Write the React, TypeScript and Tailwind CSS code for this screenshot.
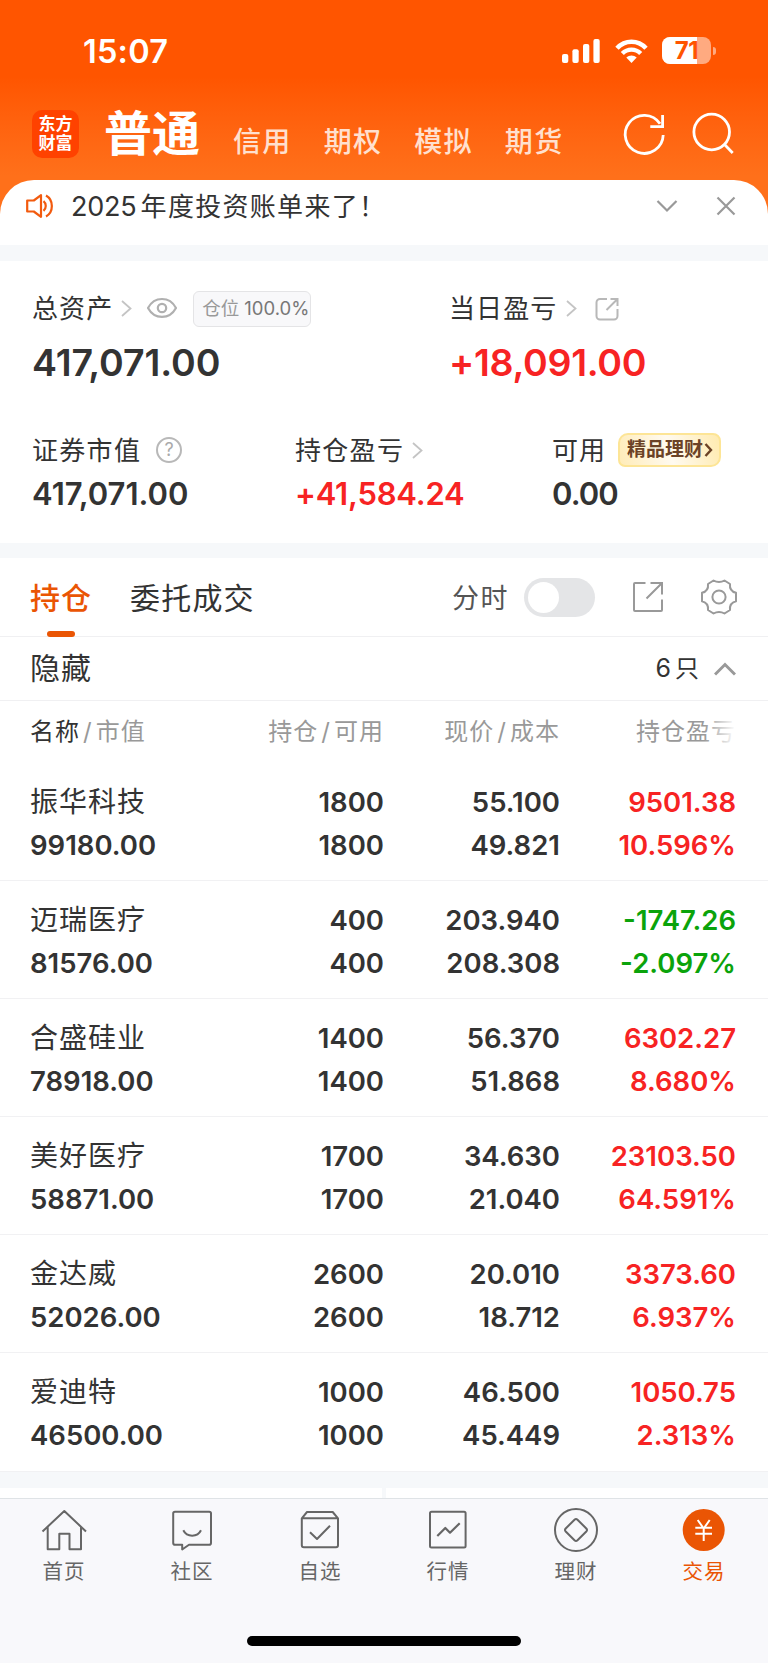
import type { ReactNode } from "react";

const accounts = ["信用", "期权", "模拟", "期货"];

const holdings = [
  { name: "振华科技", value: "99180.00", amount: "1800", usable: "1800", price: "55.100", cost: "49.821", profit: "9501.38", rate: "10.596%" },
  { name: "迈瑞医疗", value: "81576.00", amount: "400", usable: "400", price: "203.940", cost: "208.308", profit: "-1747.26", rate: "-2.097%" },
  { name: "合盛硅业", value: "78918.00", amount: "1400", usable: "1400", price: "56.370", cost: "51.868", profit: "6302.27", rate: "8.680%" },
  { name: "美好医疗", value: "58871.00", amount: "1700", usable: "1700", price: "34.630", cost: "21.040", profit: "23103.50", rate: "64.591%" },
  { name: "金达威", value: "52026.00", amount: "2600", usable: "2600", price: "20.010", cost: "18.712", profit: "3373.60", rate: "6.937%" },
  { name: "爱迪特", value: "46500.00", amount: "1000", usable: "1000", price: "46.500", cost: "45.449", profit: "1050.75", rate: "2.313%" },
];

const StatusBar = () => (
  <div className="flex h-[64px] pt-[37px] pl-[83px] pr-[52px] items-center">
    <span className="mt-[3px] font-semibold text-[32.5px] leading-[28px] tracking-[0.2px]">15:07</span>
    <svg className="ml-auto" width="38" height="24" fill="white">
      <rect x="0" y="15" width="6.3" height="9" rx="2" />
      <rect x="10.4" y="10.3" width="6.3" height="13.7" rx="2" />
      <rect x="21" y="5" width="6.3" height="19" rx="2" />
      <rect x="31.4" y="0" width="6.3" height="24" rx="2" />
    </svg>
    <svg className="ml-[15px]" width="33" height="24" fill="none" stroke="white">
      <path d="M2 9.2C10 .6 23 .6 31 9.2" strokeWidth="4.6" />
      <path d="M7.3 14.5c5.2-5.2 13.2-5.2 18.4 0" strokeWidth="4.4" />
      <path d="M16.5 24l-5.2-5.4c2.9-2.7 7.5-2.7 10.4 0z" fill="white" stroke="none" />
    </svg>
    <div className="relative ml-[14px] w-[49px] h-[27px] rounded-[8px] overflow-hidden bg-white/50">
      <div className="w-[35px] h-full bg-white" />
      <span className="absolute inset-0 text-center font-bold text-[24px] leading-[27px] tracking-[-0.5px] text-[#ff5500]">71</span>
    </div>
    <div className="ml-[2px] w-[3px] h-[8px] rounded-r-full bg-white/50" />
  </div>
);

const Header = () => (
  <header className="h-[220px] bg-linear-to-b from-[#ff5500] from-35% to-[#ff701a] to-80% text-white">
    <StatusBar />
    <div className="flex h-[116px] pl-8 pr-[30px]">
      <div className="mt-[46px] w-[47px] h-[48px] rounded-[10px] bg-[#ff4200] flex flex-col items-center justify-center font-bold text-[17px] leading-[19px]">
        <span>东方</span>
        <span>财富</span>
      </div>
      <h1 className="mt-[42px] ml-[25px] font-bold text-[48px] leading-[56px]">普通</h1>
      <nav className="mt-[60px] ml-[33px] flex gap-[32px] font-medium text-[28px] leading-[36px] tracking-[1.3px] text-[#ffe0cf]">
        {accounts.map((item) => (
          <a key={item}>{item}</a>
        ))}
      </nav>
      <svg className="mt-[46px] ml-auto" width="48" height="48" fill="none" stroke="white" strokeWidth="2.8">
        <path d="M43.2 25A19 19 0 1 1 40 13.8" />
        <path d="M42.6 5v11.6H30.3" />
      </svg>
      <svg className="mt-[46px] ml-[22px]" width="48" height="48" fill="none" stroke="white" strokeWidth="2.8">
        <circle cx="21.7" cy="22" r="17.8" />
        <path d="M34.3 34.3l8.4 8.6" />
      </svg>
    </div>
  </header>
);

const Notice = () => (
  <div className="relative -mt-10 h-[65px] rounded-t-[34px] bg-white flex items-start pt-[13px] pl-[26px] pr-8">
    <svg className="mt-px" width="28" height="24" fill="none" stroke="#f25a0e" strokeWidth="2.2">
      <path d="M1.2 6.5h6.6L15 1.2v21.6l-7.2-5.3H1.2z" strokeLinejoin="round" />
      <path d="M17.5 7.2c3 2.4 3 7.2 0 9.6M20 1.5c7.8 4.5 7.8 16.5 0 21" />
    </svg>
    <span className="mt-px ml-[17px] text-[26px] leading-[26px] tracking-[1.3px]">
      <span className="text-[27px] tracking-[-0.2px] mr-[4px]">2025</span>年度投资账单来了！
    </span>
    <svg className="ml-auto mt-[6px]" width="22" height="14" fill="none" stroke="#999" strokeWidth="2.2">
      <path d="M1.5 2L11 11.5 20.5 2" />
    </svg>
    <svg className="ml-[38px] mt-[3px]" width="20" height="20" fill="none" stroke="#999" strokeWidth="2.2">
      <path d="M1.5 1.5l17 17M18.5 1.5l-17 17" />
    </svg>
  </div>
);

const Arrow = () => (
  <svg width="11" height="17" fill="none" stroke="#c4c4c4" strokeWidth="1.8">
    <path d="M1 1l8.5 7.5L1 16" />
  </svg>
);

const Summary = () => (
  <section className="h-[282px] bg-white pt-[28px]">
    <div className="flex">
      <div className="w-[449px] pl-8">
        <div className="flex h-[38px] items-center">
          <span className="text-[26px] tracking-[1.1px]">总资产</span>
          <span className="ml-[8px]"><Arrow /></span>
          <svg className="ml-[15px]" width="30" height="22" fill="none" stroke="#b0b0b0" strokeWidth="2.2">
            <path d="M1 11C7.5-1.5 22.5-1.5 29 11 22.5 23.5 7.5 23.5 1 11z" strokeLinejoin="round" transform="matrix(1 0 0 .95 0 .5)" />
            <circle cx="15" cy="11" r="4.2" />
          </svg>
          <span className="ml-[16px] mt-[2px] flex items-center h-[36px] w-[118px] pl-[8px] whitespace-nowrap rounded-[6px] border border-[#e4e4e6] bg-[#f8f8fa] text-[18.5px] text-[#999]">
            仓位<span className="ml-[5px] text-[#777] text-[18.5px]">100.0%</span>
          </span>
        </div>
        <p className="mt-[14px] font-semibold text-[37.5px] leading-[44px] tracking-[-0.1px]">417,071.00</p>
      </div>
      <div>
        <div className="flex h-[38px] items-center">
          <span className="text-[26px] tracking-[1.1px]">当日盈亏</span>
          <span className="ml-[9px]"><Arrow /></span>
          <svg className="ml-[18px] mt-[2px]" width="24" height="24" fill="none" stroke="#b8b8b8" strokeWidth="2">
            <path d="M12 2H5a3.5 3.5 0 0 0-3.5 3.5V19A3.5 3.5 0 0 0 5 22.5h14a3.5 3.5 0 0 0 3.5-3.5v-7M15.5 2h7v7M22 2.5L11.5 13" />
          </svg>
        </div>
        <p className="mt-[14px] font-semibold text-[37.5px] leading-[44px] tracking-[-0.3px] text-[#f72323]">+18,091.00</p>
      </div>
    </div>
    <div className="mt-[46px] flex">
      <div className="w-[295px] pl-8">
        <div className="flex h-[38px] items-center">
          <span className="text-[26px] tracking-[1.3px]">证券市值</span>
          <span className="ml-[15px] w-[26px] h-[26px] rounded-full border-2 border-[#b8b8b8] text-[#aaa] text-[18px] leading-[22px] text-center">?</span>
        </div>
        <p className="mt-[7px] font-semibold text-[31px] leading-[36px]">417,071.00</p>
      </div>
      <div className="w-[257px]">
        <div className="flex h-[38px] items-center">
          <span className="text-[26px] tracking-[1.3px]">持仓盈亏</span>
          <span className="ml-[8px]"><Arrow /></span>
        </div>
        <p className="mt-[7px] font-semibold text-[31px] leading-[36px] tracking-[-0.2px] text-[#f72323]">+41,584.24</p>
      </div>
      <div>
        <div className="flex h-[38px] items-center">
          <span className="text-[26px] tracking-[1px]">可用</span>
          <span className="ml-[12px] -mt-px flex items-center h-[34px] w-[103px] pl-[7px] rounded-tl-[10px] rounded-tr-[8px] rounded-br-[10px] rounded-bl-[7px] border-2 border-[#fde596] bg-linear-[75deg] from-[#ffecb8] via-[#fffaf0] to-[#ffebb0] font-bold text-[19px] text-[#6b4226]">
            <span className="mt-px">精品理财</span>
            <svg className="ml-px" width="9" height="14" fill="none" stroke="#6b4226" strokeWidth="2.4">
              <path d="M1.5 1L7 7l-5.5 6" />
            </svg>
          </span>
        </div>
        <p className="mt-[7px] font-semibold text-[31px] leading-[36px] tracking-[-0.9px]">0.00</p>
      </div>
    </div>
  </section>
);

const Tabs = () => (
  <div className="h-[79px] bg-white border-b border-[#f0f0f2] flex items-start pl-[30px] pr-[30px]">
    <div className="flex flex-col items-center">
      <span className="mt-[20px] font-medium text-[30px] leading-[40px] tracking-[1px] text-[#ea5504]">持仓</span>
      <span className="mt-[13px] w-[28px] h-[6px] rounded-full bg-[#ea5504]" />
    </div>
    <span className="mt-[20px] ml-[38px] text-[30px] leading-[40px] tracking-[1.2px]">委托成交</span>
    <span className="mt-[21px] ml-auto text-[27px] leading-[40px] tracking-[1.5px] text-[#555]">分时</span>
    <span className="mt-[20px] ml-[15px] w-[71px] h-[39px] rounded-full bg-[#e4e5e7] p-1">
      <span className="block w-[31px] h-[31px] rounded-full bg-white" />
    </span>
    <svg className="mt-[23px] ml-[37px]" width="32" height="32" fill="none" stroke="#999" strokeWidth="2">
      <path d="M13.5 2H3a1 1 0 0 0-1 1v26a1 1 0 0 0 1 1h26a1 1 0 0 0 1-1V18.5M18.5 2H30v11.5M29.5 2.5l-15 15" />
    </svg>
    <svg className="mt-[20px] ml-[36px]" width="38" height="38" fill="none" stroke="#999" strokeWidth="2">
      <path d="M13.5 2.5q5.5 3.2 11 0l5.5 3.5q-.8 7 6 8.8v8.4q-6.800 1.800-6 8.800l-5.500 3.500q-5.500-3.200-11 0L8 32q.8-7-6-8.800v-8.400Q8.800 13 8 6z" strokeLinejoin="round" />
      <circle cx="19" cy="19" r="6.600" />
    </svg>
  </div>
);

const HoldingList = () => (
  <section className="bg-white">
    <div className="h-[64px] border-b border-[#f0f0f2] flex items-center pl-[30px] pr-[32px]">
      <span className="text-[30px] tracking-[1px]">隐藏</span>
      <span className="ml-auto text-[24px] tracking-[1px]"><span className="text-[25px] mr-[3px]">6</span>只</span>
      <svg className="ml-[14px]" width="22" height="14" fill="none" stroke="#999" strokeWidth="3">
        <path d="M1 12.5L11 2.5l10 10" />
      </svg>
    </div>
    <div className="h-[62px] grid grid-cols-[1fr_160px_176px_176px] items-center pl-[30px] pr-[32px] text-[24px] tracking-[1px] text-[#999] text-right">
      <span className="text-left"><span className="text-[#333]">名称</span><span className="mx-[3px]">/</span>市值</span>
      <span>持仓<span className="mx-[3px]">/</span>可用</span>
      <span>现价<span className="mx-[3px]">/</span>成本</span>
      <span className="relative">
        持仓盈亏
        <span className="absolute right-0 inset-y-0 w-[32px] bg-linear-to-r from-white/0 to-white" />
      </span>
    </div>
    {holdings.map((item) => (
      <div
        key={item.name}
        className="h-[118.1px] border-b border-[#f1f1f3] grid grid-cols-[1fr_160px_176px_176px] pt-[18px] pl-[30px] pr-[32px] font-semibold text-[27.5px] leading-[42.6px] text-right"
      >
        <div className="text-left">
          <p className="font-normal text-[28px] tracking-[1px]">{item.name}</p>
          <p>{item.value}</p>
        </div>
        <div>
          <p>{item.amount}</p>
          <p>{item.usable}</p>
        </div>
        <div>
          <p>{item.price}</p>
          <p>{item.cost}</p>
        </div>
        <div className={item.profit.startsWith("-") ? "text-[#0ba30b]" : "text-[#f72323]"}>
          <p>{item.profit}</p>
          <p>{item.rate}</p>
        </div>
      </div>
    ))}
  </section>
);

const NavItem = ({ label, active, children }: { label: string; active?: boolean; children: ReactNode }) => (
  <a className={active ? "flex-1 flex flex-col items-center text-[#ea5504]" : "flex-1 flex flex-col items-center text-[#666]"}>
    <svg width="48" height="48" fill="none" stroke="currentColor" strokeWidth="2" strokeLinejoin="round">
      {children}
    </svg>
    <span className="mt-[4px] text-[20.5px] leading-[28px] tracking-[1px]">{label}</span>
  </a>
);

const BottomNav = () => (
  <footer className="h-[165px] bg-[#f8f8fb] border-t border-[#dfe3e6] flex flex-col">
    <div className="flex pt-[7px]">
      <NavItem label="首页">
        <path d="M2.5 25.5L24.3 5 46 25.5M7.7 21v22.3h11.6V27.7h10.2v15.6H41V21" />
      </NavItem>
      <NavItem label="社区">
        <path d="M7 5.8h34.2a1.8 1.8 0 0 1 1.8 1.8v29.3a1.8 1.8 0 0 1-1.8 1.8H21L14.2 43.5v-4.8H7a1.8 1.8 0 0 1-1.8-1.8V7.6A1.8 1.8 0 0 1 7 5.8z" />
        <path d="M15.3 24.3c3.6 7.2 14.2 7.2 17.7 0" />
      </NavItem>
      <NavItem label="自选">
        <path d="M5.8 12.3L11 6h25.7L42 12.3v27a2 2 0 0 1-2 2H7.8a2 2 0 0 1-2-2zH42" />
        <path d="M14 26.3l7 6.7 13-13.3" />
      </NavItem>
      <NavItem label="行情">
        <rect x="6" y="5.8" width="35.6" height="35.6" rx="1.5" />
        <path d="M13.3 30l8-8 4.7 4.7 9.7-9.4" strokeWidth="2.2" />
      </NavItem>
      <NavItem label="理财">
        <circle cx="24" cy="24" r="21" />
        <path d="M22.5 13.7q1.5-1.4 3 0l8.8 8.8q1.4 1.5 0 3l-8.8 8.8q-1.5 1.4-3 0l-8.8-8.8q-1.4-1.5 0-3z" />
      </NavItem>
      <NavItem label="交易" active>
        <circle cx="23.7" cy="24" r="21" fill="currentColor" stroke="none" />
        <path d="M17.7 14l6 8.5 6-8.5M23.7 22.5V35M15.3 21.7H32M15.3 27.7H32" stroke="white" />
      </NavItem>
    </div>
    <div className="mt-auto mb-[17px] mx-auto w-[274px] h-[10px] rounded-full bg-black" />
  </footer>
);

const App = () => {
  return (
    <main className="w-[768px] h-[1663px] overflow-hidden flex flex-col bg-[#f6f8fa] text-[#333] font-[Inter,'Noto_Sans_CJK_SC',sans-serif]">
      <Header />
      <Notice />
      <div className="h-4 shrink-0" />
      <Summary />
      <div className="h-[15px] shrink-0" />
      <Tabs />
      <HoldingList />
      <div className="h-4 shrink-0" />
      <div className="flex-1 flex gap-1">
        <div className="flex-1 bg-white" />
        <div className="flex-1 bg-white" />
      </div>
      <BottomNav />
    </main>
  );
};

export default App;
